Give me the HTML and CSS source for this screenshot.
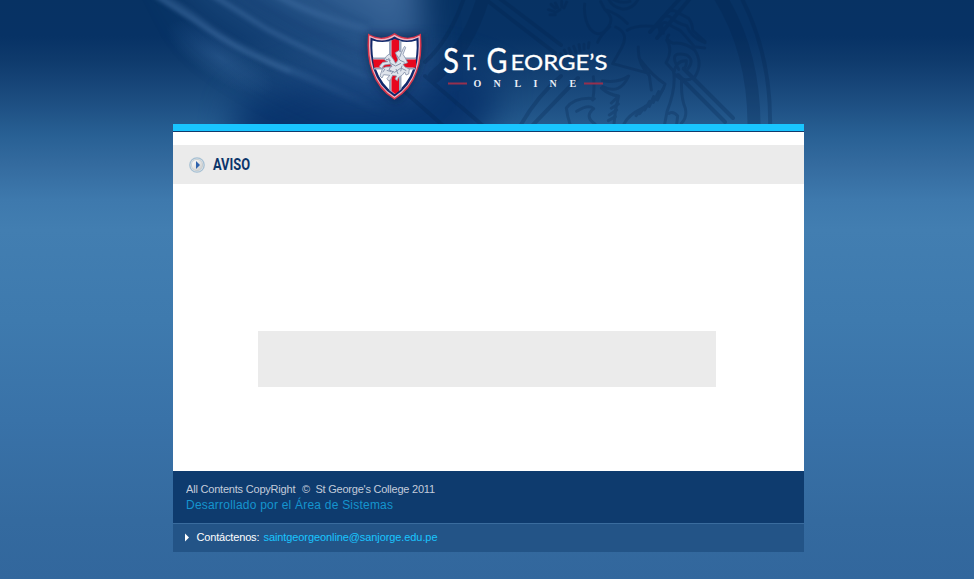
FILE: index.html
```html
<!DOCTYPE html>
<html lang="es">
<head>
<meta charset="utf-8">
<title>St. George's Online</title>
<link rel="stylesheet" href="styles.css">
</head>
<body>
<header class="masthead">
<svg class="art" viewBox="0 0 974 124" width="974" height="124" role="img" aria-label="St. George's Online">
  <defs>
    <filter id="soft" color-interpolation-filters="sRGB" filterUnits="userSpaceOnUse" x="-200" y="-300" width="1800" height="1100"><feGaussianBlur stdDeviation="7"/></filter>
    <filter id="haze" color-interpolation-filters="sRGB" filterUnits="userSpaceOnUse" x="0" y="-150" width="974" height="450"><feGaussianBlur stdDeviation="17"/></filter>
    <filter id="shade" x="-30%" y="-30%" width="160%" height="160%"><feGaussianBlur stdDeviation="4"/></filter>
    <linearGradient id="beam" gradientUnits="userSpaceOnUse" x1="375" y1="-10" x2="290" y2="115"><stop offset="0" stop-color="#6692c6" stop-opacity=".55"/><stop offset=".45" stop-color="#4d7fb8" stop-opacity=".34"/><stop offset="1" stop-color="#3a6ca8" stop-opacity="0"/></linearGradient>
    <linearGradient id="fade" gradientUnits="userSpaceOnUse" x1="150" y1="0" x2="800" y2="280"><stop offset="0" stop-color="#5d8cc2"/><stop offset=".55" stop-color="#5d8cc2" stop-opacity=".8"/><stop offset="1" stop-color="#5d8cc2" stop-opacity="0"/></linearGradient>
    <radialGradient id="patch"><stop offset="0" stop-color="#4b7fb9" stop-opacity=".3"/><stop offset="1" stop-color="#4b7fb9" stop-opacity="0"/></radialGradient>
    <clipPath id="shieldClip"><path d="M371 38Q383 44 394.500 36.500Q406 44 418 38Q419 54 415.500 69Q410 87 394.500 96Q379 87 373.500 69Q370 54 371 38Z"/></clipPath>
  </defs>
  <path d="M232 170L236 100L310 72L440 60L500 80L490 125L450 170Z" fill="#07316a" opacity=".9" filter="url(#haze)"/>
  <path d="M160 -50H415L422 20L425 90L340 112Q230 80 195 35Z" fill="url(#beam)" filter="url(#haze)"/>
  <ellipse cx="220" cy="58" rx="62" ry="22" transform="rotate(32 220 58)" fill="url(#patch)"/>
  <g transform="translate(130) scale(.33333)" fill="none" filter="url(#soft)">
    <path d="M90 -15Q180 40 240 87Q330 150 480 210T760 340" stroke="url(#fade)" stroke-width="22" opacity=".24"/>
    <path d="M70 -15Q150 35 240 93Q330 155 480 215" stroke="url(#fade)" stroke-width="8" opacity=".38"/>
    <path d="M230 -25Q320 30 410 87Q520 145 720 235" stroke="url(#fade)" stroke-width="15" opacity=".34"/>
    <path d="M330 -20Q470 65 710 165" stroke="#0b356d" stroke-width="22" opacity=".14"/>
    <path d="M420 -25Q540 45 715 90" stroke="url(#fade)" stroke-width="20" opacity=".28"/>
    <path d="M530 -20Q620 35 720 70" stroke="#123c72" stroke-width="14" opacity=".15"/>
  </g>
  <g class="seal">
    <path class="ring-wide" d="M484 -5Q469 48 434 77M719 -5Q755 52 754 130"/>
    <path class="ring" d="M465 -5Q450 40 425 62M740 -5Q772 55 770 130M405 92L448 130M425 76L488 130M480 -5L555 53M495 -5L561 45M693 -5L657 38M683 -5L650 32M518 130Q535 98 561 76M528 130L578 78M678 75L725 122M684 69L733 118"/>
    <g class="knight" transform="translate(540) scale(.33333)">
      <path d="M134 12Q130 55 150 86Q180 120 205 80Q225 55 194 28L182 5M205 -5Q214 20 249 28Q280 25 293 0M213 -5Q240 12 270 4M194 28Q233 40 262 70M209 80Q180 108 173 127M227 81Q269 100 245 143L218 191Q275 206 327 220M262 91Q290 72 356 81M295 141Q292 190 328 227L334 270M301 180Q340 230 375 252Q365 292 305 326Q265 345 252 372M187 242Q235 250 266 228Q240 286 188 260M160 230Q165 265 158 300M184 264Q208 285 236 288Q224 330 222 372M163 296Q105 290 79 324Q82 350 90 372M110 334Q145 312 161 326Q132 350 165 372"/>
      <path d="M360 100Q352 40 388 49Q410 70 440 77Q455 115 495 128M370 100Q358 63 379 68Q400 82 420 91Q441 113 463 140L494 144M380 44Q378 29 403 32L446 55Q458 72 458 91L495 125M386 105Q373 120 400 130Q430 125 464 150Q490 190 465 230Q430 253 401 220Q408 180 439 182Q440 203 430 205M416 208Q382 150 440 165Q465 180 442 208M380 120Q400 150 378 188L400 212Q410 260 381 335L374 372M425 239Q422 292 436 325Q442 353 424 370M387 340Q400 333 413 348L410 372"/>
      <path d="M33 13l13 12M25 29l17 5M30 44l16 0M46 9l7 14M65 4l0 17M80 6l-8 18M45 38l15-9M73 150l8 17M87 145l7 18M101 139l7 18M117 134l3 19M132 133l0 15M147 128l-2 16M35 180l12 14M45 170l13 12M61 161l10 12M370 265l-18 35M356 275l-16 32M341 290l-13 29M329 304l-15 26M317 318l-18 23M304 329l-16 18M232 292l-18 17M235 312l-21 13M230 330l-22 15M226 350l-21 12"/>
    </g>
  </g>
  <path d="M366 34L424 34Q427 76 396 103Q364 83 366 34Z" fill="#031d43" opacity=".55" filter="url(#shade)"/>
  <path d="M368 33.500Q382 42 394.500 33Q407 42 421 33.500Q423 57 417 72Q411 90 394.500 99.800Q378 90 372 72Q366 57 368 33.500Z" fill="#d8364b"/>
  <path d="M369.200 35.500Q382 43 394.500 34.800Q407 43 419.800 35.500Q421 57 416 71Q410 88 394.500 98Q379 88 373 71Q368 57 369.200 35.500Z" fill="#efb6c3"/>
  <path d="M370.500 37.500Q383 44 394.500 36.500Q406 44 418.500 37.500Q419.500 54 415.500 69Q410 87 394.500 96.500Q379 87 373.500 69Q369.500 54 370.500 37.500Z" fill="#10296b"/>
  <g clip-path="url(#shieldClip)">
    <path d="M372.500 40.500Q384 44 394.500 39.500Q405 44 416.500 40.500Q417.500 55 413.500 68Q408 84 394.500 94Q381 84 375.500 68Q371.500 55 372.500 40.500Z" fill="#fff"/>
    <path d="M389 41L391.500 40V92L389 90ZM399 40L401.500 41V89L399 91ZM373 57.500H416V59.500H373ZM374 67.500H415V69.500H374Z" fill="#9aa6bd"/>
    <path d="M391.500 40.500L395 39L399 40.500V91L395 94L391.500 91ZM373 59.500H416V67.500H374Z" fill="#e8071e"/>
  </g>
  <g class="rider" transform="translate(130) scale(.33333)">
    <path d="M769 169L778 162L790 178L797 190L804 180L799 165L796 158L806 152L815 157L820 145L824 139L827 143L819 163L827 176L833 188L819 193L825 201L838 207L836 222L828 225L824 216L817 225L805 233L802 242L795 237L800 228L788 226L782 239L776 243L771 236L779 226L761 224L756 234L750 228L757 207L767 201L786 200L781 192L763 195L754 206L748 199L758 187L773 185L763 179Z"/>
    <path class="detail" d="M776 174L781 190L797 198L813 190M801 166L810 181L824 187M814 158L809 172M784 195L777 210L794 217L813 204L829 212M765 207L758 217M798 207L804 222M768 178L782 181M790 213L784 222M816 197L812 214M770 211L784 215"/>
  </g>
  <g class="wordmark">
    <text x="443" y="73.300" font-size="34" textLength="16" lengthAdjust="spacingAndGlyphs">S</text>
    <text x="463" y="69.500" font-size="22" textLength="14" lengthAdjust="spacingAndGlyphs">T.</text>
    <text x="486.500" y="73.300" font-size="34" textLength="21" lengthAdjust="spacingAndGlyphs">G</text>
    <text x="510.500" y="69.500" font-size="22" textLength="97" lengthAdjust="spacingAndGlyphs">EORGE’S</text>
  </g>
  <text class="online" x="473.500 493.500 514.500 533.500 549.500 569.500" y="87">ONLINE</text>
  <path d="M448 83.500H467M584 83.500H603" stroke="#96304e" stroke-width="2"/>
</svg>
</header>
<main class="page">
  <div class="stripe"></div>
  <div class="title">
    <svg viewBox="0 0 80 24" width="80" height="24">
      <defs><linearGradient id="knob" x1="0" y1="0" x2="1" y2="1"><stop offset="0" stop-color="#fff"/><stop offset="1" stop-color="#cbcbc9"/></linearGradient></defs>
      <circle cx="8" cy="13" r="7.200" fill="#dfe7ec" stroke="#a7c0d3" stroke-width="1.300"/>
      <circle cx="8" cy="13" r="5.600" fill="url(#knob)" stroke="#bfc4c7" stroke-width=".7"/>
      <path d="M7 9L11 13L7 17Z" fill="#2e62ad"/>
      <text class="heading" x="24" y="18" textLength="37" lengthAdjust="spacingAndGlyphs">AVISO</text>
    </svg>
  </div>
  <section class="content"><div class="message"></div></section>
  <footer>
    <div class="copyright">
      <svg width="260" height="30" viewBox="0 0 260 30">
        <text class="rights" x="0" y="11" textLength="109.500">All Contents CopyRight</text>
        <text class="rights" x="116" y="11">©</text>
        <text class="rights" x="129.500" y="11" textLength="119.500">St George's College 2011</text>
        <text class="credits" x="0" y="27" textLength="207">Desarrollado por el Área de Sistemas</text>
      </svg>
    </div>
    <div class="contact">
      <svg width="260" height="18" viewBox="0 0 260 18">
        <path d="M0 4.500L4 8.500L0 12.500Z" fill="#fff"/>
        <text class="label" x="11.500" y="12" textLength="63">Contáctenos:</text>
        <a href="mailto:saintgeorgeonline@sanjorge.edu.pe"><text class="mail" x="78.500" y="12" textLength="174">saintgeorgeonline@sanjorge.edu.pe</text></a>
      </svg>
    </div>
  </footer>
</main>
</body>
</html>
```
FILE: styles.css
```css
* { box-sizing: border-box; }
body {
  margin: 0;
  height: 579px;
  overflow: hidden;
  background: linear-gradient(#073263 0, #073265 36px, #0f3b6d 62px, #1b4b7e 96px, #286094 135px, #346b9f 165px, #3e79ad 200px, #427eb1 230px, #3e7aae 320px, #3972a8 420px, #346a9f 520px, #32679d 579px);
  font-family: "Liberation Sans", Arial, sans-serif;
}
svg { display: block; }
.masthead { height: 124px; overflow: hidden; }
.seal { fill: none; stroke: #03224b; opacity: .26; stroke-linejoin: round; stroke-linecap: round; }
.ring-wide { stroke-width: 13; }
.ring { stroke-width: 4; }
.knight { stroke-width: 9; }
.rider { fill: #dfe4ec; stroke: #8793ab; stroke-width: 2.5; }
.detail { fill: none; stroke-width: 3; }
.wordmark { font-family: Lato, sans-serif; fill: #fff; stroke: #fff; stroke-width: .3; }
.online { font: bold 10px "Liberation Serif", serif; fill: #e9eef7; }
.page { display: flow-root; width: 631px; margin-left: 173px; background: #fff; }
.stripe { height: 8px; background: #19c5ff; border-bottom: 1px solid #103a6c; }
.title { height: 39px; margin-top: 13px; padding: 7px 0 0 16px; background: #ebebeb; }
.heading { font: bold 17px Roboto, sans-serif; fill: #0b356a; }
.content { height: 287px; padding: 147px 0 0 85px; }
.message { width: 458px; height: 56px; background: #ebebeb; }
.copyright { height: 52px; padding: 11px 0 0 13px; background: #0e3b6e; }
.contact { height: 29px; padding: 5px 0 0 12px; background: #235487; border-top: 1px solid #3a6c9e; }
.rights { font-size: 11px; fill: #c3ccdb; }
.credits { font-size: 12px; fill: #1595cf; }
.label { font-size: 11px; fill: #fff; }
.mail { font-size: 11px; fill: #19c5ff; }
```
